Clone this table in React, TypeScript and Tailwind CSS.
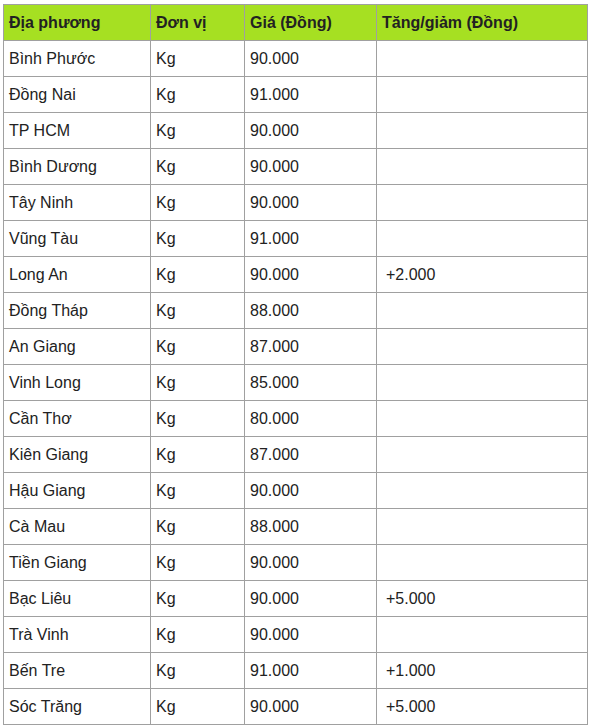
import React from "react";

const rows: [string, string, string, string][] = [
  ["Bình Phước", "Kg", "90.000", ""],
  ["Đồng Nai", "Kg", "91.000", ""],
  ["TP HCM", "Kg", "90.000", ""],
  ["Bình Dương", "Kg", "90.000", ""],
  ["Tây Ninh", "Kg", "90.000", ""],
  ["Vũng Tàu", "Kg", "91.000", ""],
  ["Long An", "Kg", "90.000", "+2.000"],
  ["Đồng Tháp", "Kg", "88.000", ""],
  ["An Giang", "Kg", "87.000", ""],
  ["Vinh Long", "Kg", "85.000", ""],
  ["Cần Thơ", "Kg", "80.000", ""],
  ["Kiên Giang", "Kg", "87.000", ""],
  ["Hậu Giang", "Kg", "90.000", ""],
  ["Cà Mau", "Kg", "88.000", ""],
  ["Tiền Giang", "Kg", "90.000", ""],
  ["Bạc Liêu", "Kg", "90.000", "+5.000"],
  ["Trà Vinh", "Kg", "90.000", ""],
  ["Bến Tre", "Kg", "91.000", "+1.000"],
  ["Sóc Trăng", "Kg", "90.000", "+5.000"],
];

function App() {
  const cell = "border border-[#a0a0a0] h-9 px-[5px] py-0 align-middle";
  return (
    <div className="bg-white min-h-screen pl-[3px] pt-[4px] font-['Liberation_Sans',Arial,sans-serif] text-[16px] text-[#222]">
      <table className="border-collapse w-[585px] table-fixed">
        <colgroup>
          <col className="w-[147px]" />
          <col className="w-[94px]" />
          <col className="w-[132px]" />
          <col />
        </colgroup>
        <thead>
          <tr className="bg-[#a6e022] text-left font-bold">
            <th className={cell}>Địa phương</th>
            <th className={cell}>Đơn vị</th>
            <th className={cell}>Giá (Đồng)</th>
            <th className={cell}>Tăng/giảm (Đồng)</th>
          </tr>
        </thead>
        <tbody>
          {rows.map((r) => (
            <tr key={r[0]}>
              <td className={cell}>{r[0]}</td>
              <td className={cell}>{r[1]}</td>
              <td className={cell}>{r[2]}</td>
              <td className={`${cell} pl-[9px]`}>{r[3]}</td>
            </tr>
          ))}
        </tbody>
      </table>
    </div>
  );
}

export default App;
